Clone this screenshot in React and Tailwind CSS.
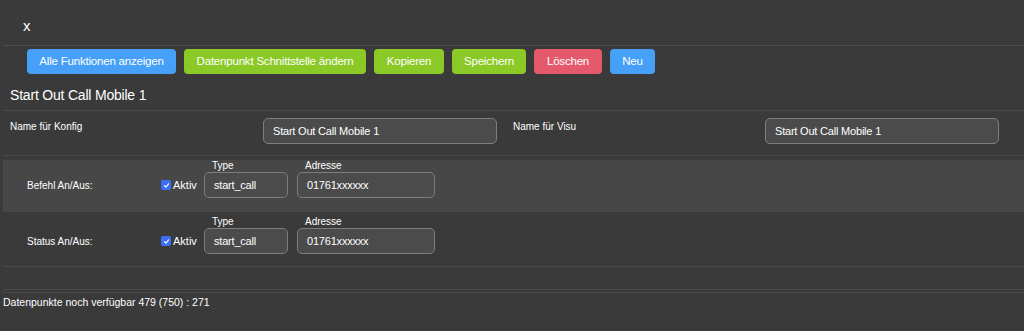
import React from "react";

// widths taken from the original layout, text is centered inside
const BUTTONS = [
  { label: "Alle Funktionen anzeigen", cls: "w-[149px] bg-[#46a0f7]" },
  { label: "Datenpunkt Schnittstelle ändern", cls: "w-[182px] bg-[#8bc926]" },
  { label: "Kopieren", cls: "w-[70px] bg-[#8bc926]" },
  { label: "Speichern", cls: "w-[74px] bg-[#8bc926]" },
  { label: "Löschen", cls: "w-[68px] bg-[#e4596c]" },
  { label: "Neu", cls: "w-[45px] bg-[#46a0f7]" },
];

const ROWS = [
  { label: "Befehl An/Aus:", type: "start_call", address: "01761xxxxxx", cls: "h-[52px] bg-[#474747]" },
  { label: "Status An/Aus:", type: "start_call", address: "01761xxxxxx", cls: "h-[54px] pt-[4px]" },
];

function TextBox({ value, className }) {
  return (
    <div
      className={`flex items-center rounded-[5px] border border-[#7d7d7d] bg-[#4b4b4b] px-[9px] text-[11px] tracking-[-0.2px] text-white ${className}`}
    >
      {value}
    </div>
  );
}

function Checkbox() {
  return (
    <span className="flex h-[10px] w-[10px] items-center justify-center rounded-[2px] bg-[#3b6ff6]">
      <svg viewBox="0 0 10 10" className="h-[7px] w-[7px]">
        <path d="M2 5.3 L4.1 7.3 L8 2.8" fill="none" stroke="white" strokeWidth="1.6" strokeLinecap="round" strokeLinejoin="round" />
      </svg>
    </span>
  );
}

function DatapointRow({ row }) {
  return (
    <div className={`ml-[3px] flex items-start ${row.cls}`}>
      <div className="mt-[12px] flex h-[26px] w-[158px] items-center pl-[24px] text-[10px]">{row.label}</div>
      <label className="mt-[12px] flex h-[26px] w-[43px] items-center gap-[2px] text-[11px]">
        <Checkbox />
        <span>Aktiv</span>
      </label>
      <div className="flex flex-col">
        <span className="pl-[8px] text-[10px] leading-[12px]">Type</span>
        <TextBox value={row.type} className="h-[26px] w-[84px]" />
      </div>
      <div className="ml-[9px] flex flex-col">
        <span className="pl-[8px] text-[10px] leading-[12px]">Adresse</span>
        <TextBox value={row.address} className="h-[26px] w-[138px]" />
      </div>
    </div>
  );
}

export default function App() {
  return (
    <div
      className="h-[331px] w-full overflow-hidden bg-[#3a3a3a] text-white"
      style={{ fontFamily: '"Liberation Sans", Arial, sans-serif' }}
    >
      {/* close */}
      <div className="h-[45px] pl-[23px] pt-[18px] text-[15px] leading-[16px]">x</div>
      <div className="ml-[3px] border-t border-[#4e4e4e]" />

      {/* actions */}
      <div className="flex gap-[8px] pl-[27px] pt-[3px]">
        {BUTTONS.map((b) => (
          <button
            key={b.label}
            className={`h-[25px] rounded-[4px] text-[11.5px] tracking-[-0.2px] text-white ${b.cls}`}
          >
            {b.label}
          </button>
        ))}
      </div>

      {/* title */}
      <div className="flex h-[36px] items-center pl-[10px] pt-[6px] text-[14px] tracking-[-0.2px]">
        Start Out Call Mobile 1
      </div>
      <div className="ml-[3px] border-t border-[#4a4a4a]" />

      {/* names */}
      <div className="flex h-[44px] pl-[10px] pt-[7px]">
        <div className="flex w-[503px]">
          <div className="w-[253px] pt-[1px] text-[10px]">Name für Konfig</div>
          <TextBox value="Start Out Call Mobile 1" className="h-[26px] w-[234px]" />
        </div>
        <div className="flex">
          <div className="w-[252px] pt-[1px] text-[10px]">Name für Visu</div>
          <TextBox value="Start Out Call Mobile 1" className="h-[26px] w-[234px]" />
        </div>
      </div>
      <div className="ml-[3px] border-t border-[#484848]" />
      <div className="h-[4px]" />

      {/* datapoints */}
      {ROWS.map((r) => (
        <DatapointRow key={r.label} row={r} />
      ))}
      <div className="ml-[3px] border-t border-[#4a4a4a]" />

      <div className="h-[22px]" />
      <div className="ml-[3px] border-t border-[#4a4a4a]" />
      <div className="h-[2px]" />
      <div className="ml-[3px] border-t border-[#4a4a4a]" />

      <div className="pl-[3px] pt-[2px] text-[10.5px]">Datenpunkte noch verfügbar 479 (750) : 271</div>
    </div>
  );
}
